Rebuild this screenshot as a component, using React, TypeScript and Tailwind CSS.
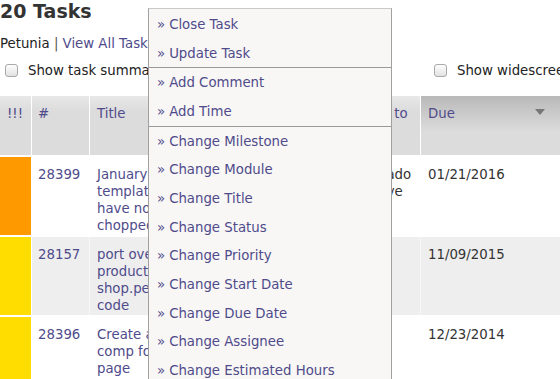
import React from "react";

const LINK = "text-[#4f4b8b]";

const menuGroups = [
  ["Close Task", "Update Task"],
  ["Add Comment", "Add Time"],
  [
    "Change Milestone",
    "Change Module",
    "Change Title",
    "Change Status",
    "Change Priority",
    "Change Start Date",
    "Change Due Date",
    "Change Assignee",
    "Change Estimated Hours",
  ],
];

const rows = [
  {
    id: "28399",
    color: "bg-[#ff9900]",
    bg: "bg-white",
    title: ["January email", "templates", "have not been", "chopped up"],
    who: ["Ed Machado", "Mike Steve"],
    due: "01/21/2016",
  },
  {
    id: "28157",
    color: "bg-[#ffdd00]",
    bg: "bg-[#eeeeee]",
    title: ["port over", "product page", "shop.perl", "code"],
    who: [],
    due: "11/09/2015",
  },
  {
    id: "28396",
    color: "bg-[#ffdd00]",
    bg: "bg-white",
    title: ["Create a new", "comp for about", "page"],
    who: [],
    due: "12/23/2014",
  },
];

const Checkbox = () => (
  <span className="inline-block shrink-0 w-[13px] h-[13px] rounded-[3px] border border-[#a9a9a9] bg-gradient-to-b from-[#fdfdfd] to-[#e2e2e2]" />
);

const ActionMenu = () => (
  <div className="absolute left-[148px] top-[8px] w-[244px] h-[400px] bg-[#f8f7f5] border border-[#a0a0a0] border-t-[#c8c8c8] pt-[1px]">
    {menuGroups.map((group, gi) => (
      <div key={gi} className={gi > 0 ? "border-t border-[#9a9a9a]" : ""}>
        {group.map((item) => (
          <div key={item} className={`h-[28.7px] flex items-center pl-[8px] ${LINK}`}>
            <span className="mr-[4px]">»</span>
            {item}
          </div>
        ))}
      </div>
    ))}
  </div>
);

export default function App() {
  return (
    <div
      className="relative w-[560px] h-[379px] overflow-hidden bg-white text-[13.3px] leading-[17px] text-[#333] whitespace-nowrap"
      style={{ fontFamily: '"DejaVu Sans", Verdana, sans-serif' }}
    >
      <h1 className="text-[19px] leading-[22px] font-bold text-[#333]">20 Tasks</h1>

      <div className="mt-[13px] h-[17px] text-[#222]">
        Petunia <span className="text-[#555]">|</span> <span className={LINK}>View All Tasks</span>
      </div>

      <div className="mt-[10px] flex items-center h-[17px]">
        <div className="w-[434px] shrink-0 flex items-center pl-[5px] gap-[10px]">
          <Checkbox />
          <span className="text-[#222]">Show task summary</span>
        </div>
        <div className="flex items-center gap-[10px] shrink-0">
          <Checkbox />
          <span className="text-[#222]">Show widescreen view</span>
        </div>
      </div>

      {/* table */}
      <div className="mt-[17px]">
        <div className={`flex h-[59px] gap-[1px] ${LINK}`}>
          <div className="w-[31px] pl-[7px] pt-[9px] bg-gradient-to-b from-[#e8e8e8] to-[#dcdcdc] to-[25%]">!!!</div>
          <div className="w-[57px] pl-[6px] pt-[9px] bg-gradient-to-b from-[#e8e8e8] to-[#dcdcdc] to-[25%]">#</div>
          <div className="w-[232px] pl-[7px] pt-[9px] bg-gradient-to-b from-[#e8e8e8] to-[#dcdcdc] to-[25%]">Title</div>
          <div className="w-[97px] pl-[7px] pt-[9px] bg-gradient-to-b from-[#e8e8e8] to-[#dcdcdc] to-[25%]">Assigned to</div>
          <div className="flex-1 pl-[7px] pt-[9px] pr-[15px] flex justify-between bg-gradient-to-b from-[#b9b9b9] to-[#dcdcdc] to-[60%]">
            <span>Due</span>
            <svg width="10" height="6" viewBox="0 0 10 6" className="mt-[4px]">
              <path d="M0 0 H10 L5 6 Z" fill="#777" />
            </svg>
          </div>
        </div>

        {rows.map((r) => (
          <div key={r.id} className={`flex h-[78px] mt-[2px] ${r.bg}`}>
            <div className={`w-[31px] ${r.color}`} />
            <div className="w-[1px] bg-white" />
            <div className={`w-[57px] pl-[6px] pt-[9px] ${LINK}`}>{r.id}</div>
            <div className="w-[1px] bg-white/60" />
            <div className={`w-[232px] pl-[7px] pt-[9px] ${LINK}`}>
              {r.title.map((t) => (
                <div key={t}>{t}</div>
              ))}
            </div>
            <div className="w-[1px] bg-white/60" />
            <div className="w-[97px] pl-[7px] pt-[9px] text-[#333]">
              {r.who.map((t) => (
                <div key={t}>{t}</div>
              ))}
            </div>
            <div className="w-[1px] bg-white/60" />
            <div className="flex-1 pl-[7px] pt-[9px] text-[#333]">{r.due}</div>
          </div>
        ))}
      </div>

      <ActionMenu />
    </div>
  );
}
